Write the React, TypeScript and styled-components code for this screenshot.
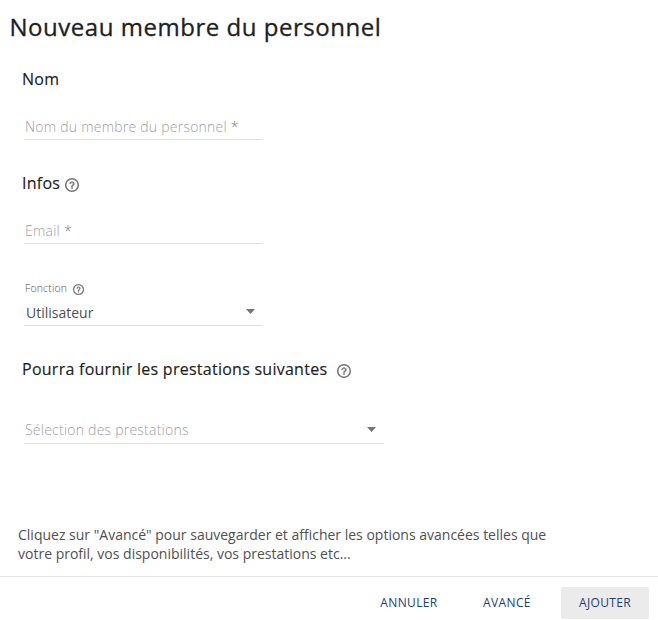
import React from 'react';
import styled, { createGlobalStyle } from 'styled-components';

const Global = createGlobalStyle`
  * { box-sizing: border-box; }
  body { margin: 0; background: #fff; color: #212121; font-family: "Open Sans", "Noto Sans", sans-serif; }
`;

const Dialog = styled.form`
  display: flex;
  flex-direction: column;
  width: 658px;
  height: 620px;
  overflow: hidden;
`;

const Title = styled.h1`
  margin: 10px 0 23px 9.5px;
  font-size: 24px;
  line-height: 34px;
  font-weight: 500;
  letter-spacing: 0.53px;
  -webkit-text-stroke: 0.3px currentColor;
  white-space: nowrap;
`;

const Section = styled.section<{ $height: number }>`
  height: ${p => p.$height}px;
  padding-left: 22px;
`;

const Heading = styled.h2<{ $gap?: number }>`
  display: flex;
  align-items: center;
  gap: ${p => p.$gap ?? 6}px;
  margin: 0;
  height: 24px;
  font-size: 16px;
  line-height: 24px;
  font-weight: 500;
  letter-spacing: 0.26px;
  -webkit-text-stroke: 0.15px currentColor;
  white-space: nowrap;
`;

const Field = styled.div<{ $width: number; $top: number; $value?: boolean; $lift?: number }>`
  display: flex;
  align-items: center;
  justify-content: space-between;
  width: ${p => p.$width}px;
  height: 26px;
  margin: ${p => p.$top}px 0 0 2px;
  padding: 0 8px ${p => p.$lift ?? 0}px ${p => (p.$value ? 2 : 1)}px;
  border-bottom: 1px solid #e0e0e0;
  font-size: 14px;
  font-weight: ${p => (p.$value ? 400 : 300)};
  letter-spacing: ${p => (p.$value ? 0 : 0.23)}px;
  color: ${p => (p.$value ? '#505050' : '#9e9e9e')};
  white-space: nowrap;
`;

const Required = styled.span`
  color: #757575;
`;

const Label = styled.div`
  display: flex;
  align-items: center;
  gap: 6px;
  height: 16px;
  margin: 36px 0 0 3px;
  font-size: 10.5px;
  font-weight: 300;
  letter-spacing: 0.15px;
  color: #505050;
`;

const Arrow = styled.span<{ $raise?: number }>`
  width: 9px;
  height: 5px;
  margin-bottom: ${p => p.$raise ?? 0}px;
  background: #757575;
  clip-path: polygon(0 0, 100% 0, 50% 100%);
`;

const Note = styled.p`
  width: 560px;
  margin: 0 0 0 18px;
  font-size: 14px;
  line-height: 19px;
  color: #505050;
  white-space: nowrap;
`;

const Actions = styled.footer`
  display: flex;
  justify-content: flex-end;
  gap: 10px;
  height: 44px;
  margin-top: auto;
  padding: 10px 9px 0 0;
  border-top: 1px solid #e4e4e4;
`;

const Button = styled.button<{ $primary?: boolean }>`
  width: 88px;
  height: 32px;
  padding: 0 0 2px;
  border: 0;
  border-radius: 2px;
  background: ${p => (p.$primary ? '#ebebeb' : 'transparent')};
  color: #1d3e6e;
  font: 500 12px "Open Sans", sans-serif;
  letter-spacing: 0.36px;
`;

const Icon = styled.svg`
  display: block;
  flex: none;
  margin-top: 3px;
  overflow: visible;
`;

const Help = ({ size }: { size: number }) => (
  <Icon width={size} height={size} viewBox="0 0 20 20">
    <circle cx="10" cy="10" r="9" fill="none" stroke="#757575" strokeWidth="2.2" />
    <g transform="translate(10 10) scale(.86) translate(-12 -12)" fill="#757575" stroke="#757575" strokeWidth="0.8">
      <path d="M11 18h2v-2h-2zM12 6c-2.210 0-4 1.790-4 4h2c0-1.100.9-2 2-2s2 .9 2 2c0 2-3 1.750-3 5h2c0-2.250 3-2.500 3-5 0-2.210-1.790-4-4-4z" />
    </g>
  </Icon>
);

export default function App() {
  return (
    <Dialog>
      <Global />
      <Title>Nouveau membre du personnel</Title>
      <Section $height={104}>
        <Heading>Nom</Heading>
        <Field $width={239} $top={23}><span>Nom du membre du personnel <Required>*</Required></span></Field>
      </Section>
      <Section $height={186}>
        <Heading $gap={5}>Infos <Help size={14} /></Heading>
        <Field $width={239} $top={23}><span>Email <Required>*</Required></span></Field>
        <Label>Fonction <Help size={11} /></Label>
        <Field $width={239} $top={4} $value>Utilisateur <Arrow $raise={2} /></Field>
      </Section>
      <Section $height={168}>
        <Heading $gap={10}>Pourra fournir les prestations suivantes <Help size={14} /></Heading>
        <Field $width={360} $top={37} $lift={2}>Sélection des prestations <Arrow /></Field>
      </Section>
      <Note>
        Cliquez sur "Avancé" pour sauvegarder et afficher les options avancées telles que<br />
        votre profil, vos disponibilités, vos prestations etc...
      </Note>
      <Actions>
        <Button type="button">ANNULER</Button>
        <Button type="button">AVANCÉ</Button>
        <Button type="submit" $primary>AJOUTER</Button>
      </Actions>
    </Dialog>
  );
}
